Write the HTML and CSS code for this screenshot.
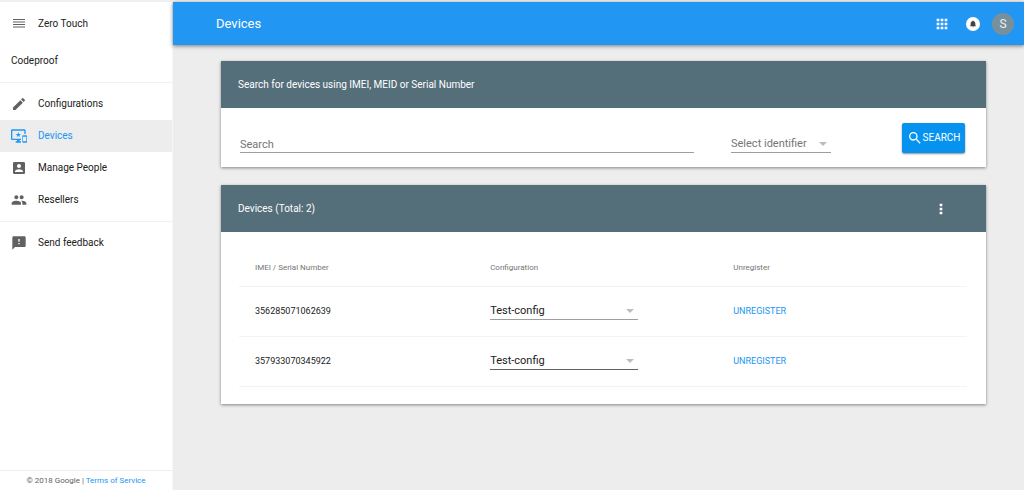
FILE: index.html
```html
<!DOCTYPE html>
<html lang="en">
<head>
<meta charset="utf-8">
<meta name="viewport" content="width=device-width, initial-scale=1">
<title>Zero Touch - Devices</title>
<link rel="stylesheet" href="styles.css">
</head>
<body>
<div class="app">
  <aside class="sidebar">
    <div class="brand">
      <button class="icon-button" type="button" aria-label="Menu">
        <svg class="icon" viewBox="0 0 16 16"><path d="M2 3.500h12M2 6h12M2 8.500h12M2 11h12" stroke="currentColor" stroke-width="1.200"/></svg>
      </button>
      <span>Zero Touch</span>
    </div>
    <div class="account">Codeproof</div>
    <nav class="nav">
      <a class="nav-item" href="#">
        <svg class="icon" viewBox="0 0 24 24"><path d="M3 17.250V21h3.750L17.810 9.940l-3.750-3.750L3 17.250zM20.710 7.040a1 1 0 0 0 0-1.410l-2.340-2.340a1 1 0 0 0-1.410 0l-1.830 1.830 3.750 3.750 1.830-1.830z"/></svg>
        <span>Configurations</span>
      </a>
      <a class="nav-item nav-item-active" href="#" aria-current="page">
        <svg class="icon" viewBox="0 0 24 24"><path d="M23 11.010L18 11c-.55 0-1 .45-1 1v9c0 .55.45 1 1 1h5c.55 0 1-.45 1-1v-9c0-.55-.45-.99-1-.99zM23 20h-5v-7h5v7zM20 2H2C.89 2 0 2.890 0 4v12c0 1.100.89 2 2 2h7v2H7v2h8v-2h-2v-2h2v-2H2V4h18v5h2V4c0-1.110-.9-2-2-2zm-8.030 7L11 6l-.97 3H7l2.470 1.760-.94 2.910 2.470-1.800 2.470 1.800-.94-2.910L15 9h-3.030z"/></svg>
        <span>Devices</span>
      </a>
      <a class="nav-item" href="#">
        <svg class="icon" viewBox="0 0 24 24"><path d="M3 5v14a2 2 0 0 0 2 2h14c1.100 0 2-.9 2-2V5c0-1.100-.9-2-2-2H5a2 2 0 0 0-2 2zm12 4c0 1.660-1.340 3-3 3s-3-1.340-3-3 1.340-3 3-3 3 1.340 3 3zm-9 8c0-2 4-3.100 6-3.100s6 1.100 6 3.100v1H6v-1z"/></svg>
        <span>Manage People</span>
      </a>
      <a class="nav-item" href="#">
        <svg class="icon" viewBox="0 0 24 24"><path d="M16 11c1.660 0 2.990-1.340 2.990-3S17.660 5 16 5s-3 1.340-3 3 1.340 3 3 3zm-8 0c1.660 0 2.990-1.340 2.990-3S9.660 5 8 5 5 6.340 5 8s1.340 3 3 3zm0 2c-2.330 0-7 1.170-7 3.500V19h14v-2.500c0-2.330-4.670-3.500-7-3.500zm8 0c-.29 0-.62.020-.97.050 1.160.84 1.970 1.970 1.970 3.450V19h6v-2.500c0-2.330-4.670-3.500-7-3.500z"/></svg>
        <span>Resellers</span>
      </a>
    </nav>
    <nav class="nav">
      <a class="nav-item" href="#">
        <svg class="icon" viewBox="0 0 24 24"><path d="M20 2H4c-1.100 0-2 .9-2 2v18l4-4h14c1.100 0 2-.9 2-2V4c0-1.100-.9-2-2-2zm-7 12h-2v-2h2v2zm0-4h-2V6h2v4z"/></svg>
        <span>Send feedback</span>
      </a>
    </nav>
    <footer class="legal">© 2018 Google | <a href="#">Terms of Service</a></footer>
  </aside>

  <div class="page">
    <header class="topbar">
      <h1 class="title">Devices</h1>
      <button class="icon-button" type="button" aria-label="Apps">
        <svg class="icon" viewBox="0 0 24 24"><path d="M4 8h4V4H4v4zm6 12h4v-4h-4v4zm-6 0h4v-4H4v4zm0-6h4v-4H4v4zm6 0h4v-4h-4v4zm6-10v4h4V4h-4zm-6 4h4V4h-4v4zm6 6h4v-4h-4v4zm0 6h4v-4h-4v4z"/></svg>
      </button>
      <button class="bell" type="button" aria-label="Notifications">
        <svg class="bell-icon" viewBox="0 0 24 24"><path d="M12 22a2 2 0 0 0 2-2h-4a2 2 0 0 0 2 2zm7-6v-5c0-3.500-2-6.200-5.300-7V3a1.700 1.700 0 0 0-3.400 0v1C7 4.800 5 7.500 5 11v5l-2 2v1h18v-1l-2-2z"/></svg>
      </button>
      <button class="avatar" type="button" aria-label="Account">S</button>
    </header>

    <main class="content">
      <section class="card">
        <header class="card-header"><h2 class="card-title">Search for devices using IMEI, MEID or Serial Number</h2></header>
        <form class="search">
          <input class="search-input" type="text" placeholder="Search" aria-label="Search">
          <div class="select select-identifier">
            <select class="select-field" aria-label="Select identifier"><option>Select identifier</option></select>
            <svg class="arrow" viewBox="0 0 8 4"><path d="M0 0h8L4 4z"/></svg>
          </div>
          <button class="search-button" type="submit">
            <svg class="icon" viewBox="0 0 24 24"><path d="M15.500 14h-.79l-.28-.27A6.470 6.470 0 0 0 16 9.500 6.500 6.500 0 1 0 9.500 16c1.610 0 3.090-.59 4.230-1.570l.27.28v.79l5 4.990L20.490 19l-4.990-5zm-6 0a4.500 4.500 0 1 1 0-9 4.500 4.500 0 0 1 0 9z"/></svg>
            <span>SEARCH</span>
          </button>
        </form>
      </section>

      <section class="card">
        <header class="card-header">
          <h2 class="card-title">Devices (Total: 2)</h2>
          <button class="icon-button" type="button" aria-label="More options">
            <svg class="icon" viewBox="0 0 24 24"><path d="M10 4h4v4h-4zM10 10h4v4h-4zM10 16h4v4h-4z"/></svg>
          </button>
        </header>
        <div class="table-wrap">
          <table class="devices">
            <thead>
              <tr><th class="col-id">IMEI / Serial Number</th><th class="col-config">Configuration</th><th>Unregister</th></tr>
            </thead>
            <tbody>
              <tr>
                <td>356285071062639</td>
                <td>
                  <div class="select">
                    <select class="select-field" aria-label="Configuration for 356285071062639"><option>Test-config</option></select>
                    <svg class="arrow" viewBox="0 0 8 4"><path d="M0 0h8L4 4z"/></svg>
                  </div>
                </td>
                <td><button class="unregister" type="button">UNREGISTER</button></td>
              </tr>
              <tr>
                <td>357933070345922</td>
                <td>
                  <div class="select select-focused">
                    <select class="select-field" aria-label="Configuration for 357933070345922"><option>Test-config</option></select>
                    <svg class="arrow" viewBox="0 0 8 4"><path d="M0 0h8L4 4z"/></svg>
                  </div>
                </td>
                <td><button class="unregister" type="button">UNREGISTER</button></td>
              </tr>
            </tbody>
          </table>
        </div>
      </section>
    </main>
  </div>
</div>
</body>
</html>
```

FILE: styles.css
```css
* { box-sizing: border-box; }

body {
  margin: 0;
  font: 10px/16px Roboto, "Liberation Sans", sans-serif;
  color: #212121;
  background: #ededed;
}

button, input, select { font: inherit; color: inherit; border: 0; padding: 0; margin: 0; background: none; }
button { cursor: pointer; }
a { color: #2196f3; text-decoration: none; }

.app {
  display: flex;
  min-height: 100vh;
  border-top: 2px solid #f0f0f0;
}

.icon { display: block; width: 16px; height: 16px; fill: currentColor; flex: none; }
.icon-button { display: flex; }

/* Sidebar */
.sidebar {
  display: flex;
  flex-direction: column;
  flex: none;
  width: 173px;
  background: #fff;
  border-right: 1px solid #f5f5f5;
}
.brand { display: flex; align-items: center; gap: 11px; height: 43px; padding: 0 11px; }
.brand .icon { color: #616161; }
.account { padding: 8px 11px 13px; }
.nav { padding: 5px 0; border-top: 1px solid #f0f0f0; }
.nav-item { display: flex; align-items: center; gap: 11px; padding: 8px 11px; color: #212121; }
.nav-item .icon { color: #616161; }
.nav-item-active { background: #ededed; }
.nav-item-active, .nav-item-active .icon { color: #2196f3; }
.legal {
  margin-top: auto;
  padding: 2px 0 1px;
  border-top: 1px solid #eee;
  font-size: 8px;
  text-align: center;
  color: #616161;
}

/* Main area */
.page { flex: 1; min-width: 0; }
.topbar {
  display: flex;
  align-items: center;
  height: 43px;
  padding: 0 10px 0 43px;
  gap: 16px;
  background: #2196f3;
  color: #fff;
  box-shadow: 0 1px 4px rgba(0, 0, 0, .5);
}
.title { flex: 1; margin: 0; font-size: 13px; font-weight: 400; }
.bell {
  display: grid;
  place-items: center;
  width: 14px;
  height: 14px;
  border-radius: 50%;
  background: #fff;
  color: #424242;
}
.bell-icon { width: 8px; height: 8px; fill: currentColor; }
.avatar { width: 22px; height: 22px; margin-left: -4px; border-radius: 50%; background: #78909c; color: #eceff1; font-size: 12px; line-height: 22px; }

.content { display: grid; gap: 18px; padding: 16px 38px 24px 48px; }
.card { background: #fff; box-shadow: 0 1px 3px rgba(0, 0, 0, .45); }
.card-header {
  display: flex;
  align-items: center;
  justify-content: space-between;
  height: 47px;
  padding: 0 37px 0 17px;
  background: #546e7a;
  color: #fff;
}
.card-title { margin: 0; font-size: 10px; font-weight: 400; }

.search { display: flex; align-items: flex-end; padding: 15px 21px 14px 19px; }
.search-input {
  flex: 1;
  min-width: 0;
  height: 17px;
  margin-right: 37px;
  border-bottom: 1px solid #9e9e9e;
  border-radius: 0;
  font-size: 11px;
  outline: 0;
}
.search-input::placeholder { color: #757575; opacity: 1; }
.search-button {
  display: flex;
  align-items: center;
  justify-content: center;
  width: 63px;
  height: 30px;
  margin-left: 71px;
  border-radius: 2px;
  background: #0693ef;
  color: #fff;
  box-shadow: 0 1px 2px rgba(0, 0, 0, .45);
}

.select { display: grid; align-items: center; width: 148px; border-bottom: 1px solid #9e9e9e; font-size: 11px; }
.select-field { grid-area: 1 / 1; width: 100%; height: 16px; appearance: none; outline: 0; }
.arrow { grid-area: 1 / 1; justify-self: end; width: 8px; height: 4px; margin-right: 4px; fill: #bdbdbd; pointer-events: none; }
.select-identifier { width: 100px; color: #757575; }
.select-focused { border-color: #616161; }

.table-wrap { padding: 18px 19px 17px 18px; }
.devices { width: 100%; border-collapse: collapse; table-layout: fixed; font-size: 9px; }
.devices th, .devices td { padding: 0 0 0 16px; border-bottom: 1px solid #f3f3f3; text-align: left; }
.devices th { height: 36px; font-size: 8px; font-weight: 400; color: #757575; }
.devices td { height: 50px; }
.col-id { width: 32.3%; }
.col-config { width: 33.4%; }
.unregister { color: #2196f3; }
```
